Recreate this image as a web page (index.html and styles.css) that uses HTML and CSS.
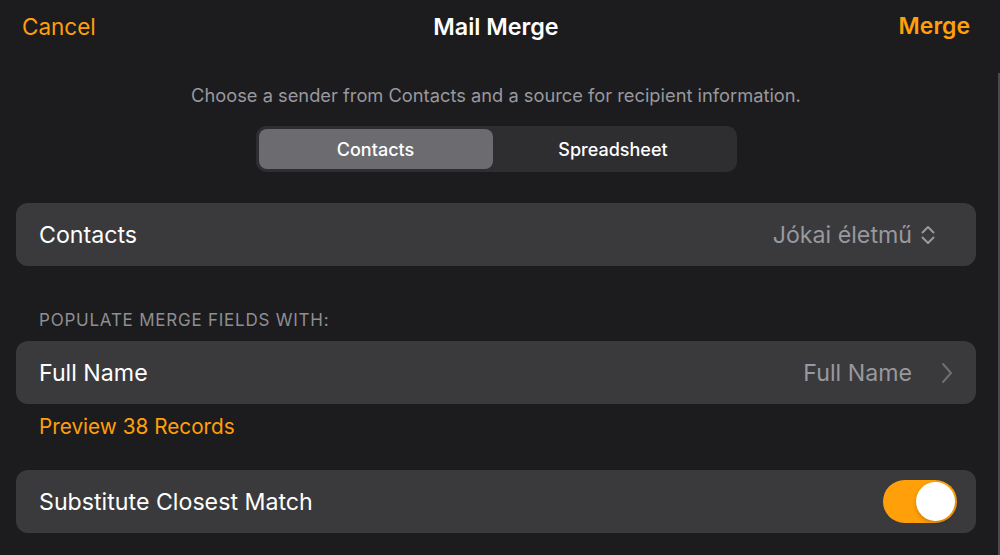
FILE: index.html
```html
<!DOCTYPE html>
<html lang="en">
<head>
<meta charset="utf-8">
<title>Mail Merge</title>
<link rel="stylesheet" href="styles.css">
</head>
<body>
<div class="sheet">
  <header class="nav">
    <span class="nav-btn left">Cancel</span>
    <span class="nav-title">Mail Merge</span>
    <span class="nav-btn right">Merge</span>
  </header>
  <main class="content">
    <p class="subtitle">Choose a sender from Contacts and a source for recipient information.</p>
    <div class="seg-wrap">
      <div class="segmented">
        <div class="seg selected">Contacts</div>
        <div class="seg">Spreadsheet</div>
      </div>
    </div>
    <div class="row first">
      <span class="row-label">Contacts</span>
      <span class="row-value">Jókai életmű
        <svg class="updown" width="16" height="22" viewBox="0 0 16 22"><path d="M2.5 8.5 L8 3 L13.5 8.5 M2.5 13.5 L8 19 L13.5 13.5" fill="none" stroke="#98989e" stroke-width="2" stroke-linecap="round" stroke-linejoin="round"/></svg>
      </span>
    </div>
    <div class="section-header">POPULATE MERGE FIELDS WITH:</div>
    <div class="row">
      <span class="row-label">Full Name</span>
      <span class="row-value">Full Name
        <svg class="chev" width="12" height="24" viewBox="0 0 12 24"><path d="M2 3 L10 12 L2 21" fill="none" stroke="#6e6e73" stroke-width="2" stroke-linecap="round" stroke-linejoin="round"/></svg>
      </span>
    </div>
    <div class="link">Preview 38 Records</div>
    <div class="row toggle-row">
      <span class="row-label">Substitute Closest Match</span>
      <span class="toggle"><span class="knob"></span></span>
    </div>
  </main>
  <div class="edge"></div>
</div>
</body>
</html>
```
FILE: styles.css
```css
html, body {
  margin: 0;
  padding: 0;
  background: #1c1c1e;
}
body {
  font-family: Inter, "Noto Sans", "Liberation Sans", sans-serif;
  color: #ffffff;
  width: 1000px;
  height: 555px;
  overflow: hidden;
}
.sheet {
  position: relative;
  height: 555px;
}
.nav {
  display: grid;
  grid-template-columns: 1fr auto 1fr;
  align-items: center;
  height: 52px;
  padding: 0 30px 0 22px;
}
.nav-btn {
  color: #ff9f0a;
  font-size: 22.5px;
}
.nav-btn.left { justify-self: start; }
.nav-btn.right { justify-self: end; font-weight: 600; font-size: 23px; }
.nav-title {
  font-size: 23.3px;
  font-weight: 600;
}
.content {
  padding: 0 24px 0 16px;
  display: flex;
  flex-direction: column;
}
.subtitle {
  margin: 33px 0 0;
  text-align: center;
  font-size: 18.3px;
  line-height: 20px;
  color: #98989e;
}
.seg-wrap {
  display: flex;
  justify-content: center;
  margin-top: 21px;
}
.segmented {
  display: grid;
  grid-template-columns: 234px 241px;
  width: 481px;
  height: 46px;
  box-sizing: border-box;
  padding: 3px;
  background: #2e2e31;
  border-radius: 10px;
}
.seg {
  display: flex;
  align-items: center;
  justify-content: center;
  font-size: 18px;
  font-weight: 500;
  color: #fff;
  border-radius: 8px;
}
.seg.selected {
  background: #6c6c70;
}
.row {
  display: flex;
  align-items: center;
  justify-content: space-between;
  height: 63px;
  background: #3a3a3c;
  border-radius: 12px;
  padding: 0 23px;
  margin-top: 31px;
}
.row-label {
  font-size: 23.2px;
}
.row-value {
  display: flex;
  align-items: center;
  gap: 8px;
  font-size: 23.2px;
  color: #98989e;
}
.updown { margin-right: 17px; }
.chev { margin-left: 21px; }
.section-header {
  margin: 44px 0 0 23px;
  font-size: 17px;
  letter-spacing: 0.77px;
  line-height: 20px;
  color: #8e8e93;
}
.section-header + .row { margin-top: 11px; }
.link {
  margin: 11px 0 0 23px;
  font-size: 20.75px;
  line-height: 24px;
  color: #ff9f0a;
}
.toggle-row { padding-right: 19px; }
.toggle {
  width: 74px;
  height: 43px;
  border-radius: 22px;
  background: #ff9f0a;
  display: flex;
  align-items: center;
  justify-content: flex-end;
  padding: 0 2px;
  box-sizing: border-box;
}
.knob {
  width: 39px;
  height: 39px;
  border-radius: 50%;
  background: #fff;
  box-shadow: 0 2px 4px rgba(0,0,0,0.2);
}
.edge {
  position: absolute;
  top: 73px;
  right: 0;
  bottom: 0;
  width: 2px;
  background: #4a4a4c;
}
```
